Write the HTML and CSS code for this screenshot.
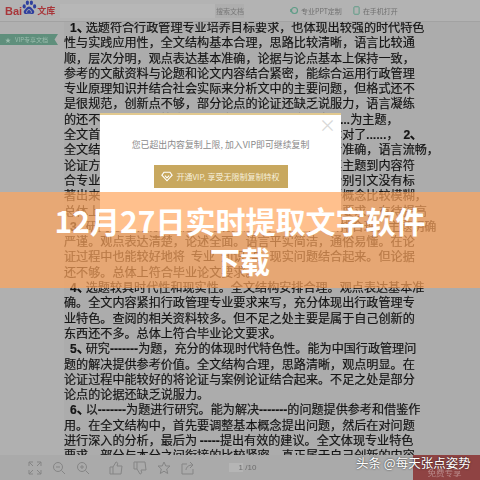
FILE: index.html
```html
<!DOCTYPE html>
<html lang="zh-CN">
<head>
<meta charset="utf-8">
<title>12月27日实时提取文字软件下载</title>
<link rel="stylesheet" href="styles.css">
</head>
<body>
<div class="screen">
  <header class="topbar">
    <div class="logo"><span class="logo-bai">Bai</span><svg class="paw" viewBox="0 0 20 20"><g fill="#2f3f9e"><ellipse cx="4" cy="8" rx="2" ry="2.6"/><ellipse cx="8" cy="3.5" rx="2" ry="2.8"/><ellipse cx="13" cy="3.5" rx="2" ry="2.8"/><ellipse cx="17" cy="8" rx="2" ry="2.6"/><path d="M10 8c-3 0-4 3-6 5-1.500 2 0 5 3 4.500 2-.3 4-.3 6 0 3 .5 4.500-2.500 3-4.500-2-2-3-5-6-5z"/></g><path d="M7 16c0-3 1.500-4 3-4s3 1 3 4" fill="none" stroke="#b3b3b3" stroke-width="1.200"/></svg><span class="logo-wk">文库</span></div>
    <div class="search"><span class="search-btn">搜索文档</span></div>
    <div class="tool"><svg class="tool-icon" viewBox="0 0 12 12"><circle cx="6" cy="6" r="4" fill="none" stroke="#5d9c86" stroke-width="1.500"/><path d="M1 4v4" stroke="#5d9c86" stroke-width="1.500"/></svg>专业PPT定制</div>
    <div class="tool"><svg class="tool-icon" viewBox="0 0 12 12"><rect x="2.500" y="1" width="7" height="10" rx="1" fill="none" stroke="#5d9c86" stroke-width="1.300"/></svg>在手机打开</div>
  </header>
  <div class="main">
    <aside class="side"><div class="vip-tag"><span class="star">★</span>VIP专享文档</div></aside>
    <article class="doc">
      <p class="first"><b>1、</b>选题符合行政管理专业培养目标要求，也体现出较强的时代特色</p>
      <p>性与实践应用性，全文结构基本合理，思路比较清晰，语言比较通</p>
      <p>顺，层次分明，观点表达基本准确，论据与论点基本上保持一致，</p>
      <p>参考的文献资料与论题和论文内容结合紧密，能综合运用行政管理</p>
      <p>专业原理知识并结合社会实际来分析文中的主要问题，但格式还不</p>
      <p>是很规范，创新点不够，部分论点的论证还缺乏说服力，语言凝练</p>
      <p>的还不够。总体上符合毕业论文要求。以本文研究<b class="dots">......</b>为主题，</p>
      <p>全文首先提出问题，结构安排得当，论述观点也基本对了<b class="dots">......</b>，<b class="num">2、</b></p>
      <p>全文结构合理，论述清楚，观点较为明确且比较清晰准确，语言流畅，</p>
      <p>论证方法得当，能够紧扣论文研究的中心主题，从其主题到内容符</p>
      <p>合专业要求，但有部分内容偏离，结构尚可，另有个别引文没有标</p>
      <p>著出来，结构有待进一步改进，同时对部分专业术语概念比较模糊，</p>
      <p>总体上符合毕业论文要求。全文主题到内容符合专业要求，有待提高</p>
      <p class="first"><b>3、</b>研究方向明确，选题具有现实意义。全文结构安排合理，主题明确</p>
      <p>严谨。观点表达清楚，论述全面。语言平实简洁，通俗易懂。在论</p>
      <p>证过程中也能较好地将&ensp;专业&ensp;知识&ensp;与&ensp;现实问题结合起来。但论据</p>
      <p>还不够。总体上符合毕业论文要求。</p>
      <p class="first"><b>4、</b>选题较具时代性和现实性。全文结构安排合理。观点表达基本准</p>
      <p>确。全文内容紧扣行政管理专业要求来写，充分体现出行政管理专</p>
      <p>业特色。查阅的相关资料较多。但不足之处主要是属于自己创新的</p>
      <p>东西还不多。总体上符合毕业论文要求。</p>
      <p class="first"><b>5、</b>研究<b>-------</b>为题，充分的体现时代特色性。能为中国行政管理问</p>
      <p>题的解决提供参考价值。全文结构合理，思路清晰，观点明显。在</p>
      <p>论证过程中能较好的将论证与案例论证结合起来。不足之处是部分</p>
      <p>论点的论据还缺乏说服力。</p>
      <p class="first"><b>6、</b>以<b>-------</b>为题进行研究。能为解决<b>-------</b>的问题提供参考和借鉴作</p>
      <p>用。在全文结构中，首先要调整基本概念提出问题，然后在对问题</p>
      <p>进行深入的分析，最后为 <b>-----</b>提出有效的建议。全文体现专业特色</p>
      <p>要求。部分与本分之间衔接的比较紧密。真正属于自己创新的内容</p>
    </article>
  </div>
  <footer class="bottombar">
    <svg class="fi" viewBox="0 0 14 14"><path d="M1 5V1h4M9 1h4v4M13 9v4H9M5 13H1V9M1 1l4 4M13 1L9 5M13 13L9 9M1 13l4-4"/></svg>
    <svg class="fi" viewBox="0 0 14 14"><circle cx="6" cy="6" r="4.500"/><path d="M4 6h4M9.500 9.500L13 13"/></svg>
    <svg class="fi" viewBox="0 0 14 14"><circle cx="6" cy="6" r="4.500"/><path d="M4 6h4M6 4v4M9.500 9.500L13 13"/></svg>
    <svg class="fi gap" viewBox="0 0 14 14"><path d="M1 6h3v7H1zM4 6l3-5c1 0 2 1 1.500 2L8 5h5l-1 8H4"/></svg>
    <svg class="fi" viewBox="0 0 14 14"><path d="M1 8h3V1H1zM4 8l3 5c1 0 2-1 1.500-2L8 9h5l-1-8H4"/></svg>
    <svg class="fi" viewBox="0 0 14 14"><path d="M7 1l1.800 4H13l-3.300 3 1 4.500L7 10.200 3.300 12.500l1-4.500L1 5h4.200z"/></svg>
    <svg class="fi" viewBox="0 0 14 14"><path d="M12 8v5H1V3h5M5 9c0-3 3-5 6-5M9 1l3 3-3 3"/></svg>
    <span class="pager"><span class="page-box">1</span> /10</span>
    <span class="free">免费专享</span>
  </footer>
  <div class="modal">
    <span class="close">×</span>
    <p class="modal-text">您已超出内容复制上限, 加入VIP即可继续复制</p>
    <div class="modal-btn"><svg class="gem" viewBox="0 0 14 12"><path d="M3.500 1h7L13 4.500 7 11 1 4.500zM4.500 5L7 7.500 9.500 5" fill="none" stroke="#fff" stroke-width="1.300"/></svg>开通VIP, 享受无限制复制特权</div>
  </div>
  <div class="banner"><h1>12月27日实时提取文字软件下载</h1></div>
  <div class="watermark">头条 @每天张点姿势</div>
</div>
</body>
</html>
```
FILE: styles.css
```css
* { box-sizing: border-box; margin: 0; padding: 0; }
html, body { width: 480px; height: 480px; overflow: hidden; }
body { font-family: "Noto Sans CJK SC", "Liberation Sans", sans-serif; background: #acacac; }
.screen { position: relative; width: 480px; height: 480px; overflow: hidden; display: flex; flex-direction: column; background: #acacac; }
.topbar { position: relative; z-index: 1; height: 22px; flex: none; display: flex; align-items: center; background: #b3b3b3; border-bottom: 1px solid #a2a2a2; filter: blur(.4px); }
.logo { width: 60px; flex: none; display: flex; align-items: center; padding-left: 5px; font-size: 9px; font-weight: 700; color: #a8363a; }
.logo-bai { font-family: "Liberation Sans", sans-serif; font-size: 11px; }
.paw { width: 16px; height: 16px; margin: -5px 0 0 -1px; flex: none; }
.logo-wk { white-space: nowrap; }
.search { width: 184px; height: 14px; background: #b7b7b7; display: flex; justify-content: flex-end; flex: none; }
.search-btn { width: 29px; font-size: 7px; line-height: 14px; color: #777; white-space: nowrap; overflow: hidden; background: #aeaeae; padding-left: 1px; }
.tool { display: flex; align-items: center; font-size: 7px; color: #6f6f6f; margin-left: 10px; white-space: nowrap; }
.tool + .tool { margin-left: 10px; }
.search + .tool { margin-left: 46px; }
.tool-icon { width: 9px; height: 9px; margin-right: 2px; }
.main { flex: 1; min-height: 0; display: flex; overflow: hidden; }
.side { width: 64px; flex: none; background: #b0b0b0; padding-top: 12px; filter: blur(.4px); }
.vip-tag { width: 58px; height: 11px; background: #5f8f7c; color: #9dbdaf; font-size: 6px; line-height: 11px; white-space: nowrap; padding-left: 5px; clip-path: polygon(0 0,100% 0,94% 50%,100% 100%,0 100%); }
.star { margin-right: 4px; }
.doc { flex: 1; margin-top: -3px; overflow: hidden; color: #141414; font-size: 12.100px; line-height: 15.300px; -webkit-text-stroke: .2px #141414; filter: blur(.35px); }
.doc p { white-space: nowrap; height: 15.300px; }
.doc .first { padding-left: 6px; }
.doc b { font-family: "Liberation Sans", sans-serif; font-weight: 700; }
.doc .first > b:first-child { margin-right: -3px; }
.doc .dots { font-size: 11px; letter-spacing: .3px; }
.doc .num { margin-left: 5px; }
.bottombar { height: 25px; flex: none; display: flex; align-items: center; padding-left: 28px; gap: 10px; background: #aaaaaa; filter: blur(.4px); position: relative; }
.fi { width: 14px; height: 14px; fill: none; stroke: #858585; stroke-width: 1; }
.fi.gap { margin-left: 9px; }
.pager { margin-left: 24px; font-size: 8px; color: #6c6c6c; font-family: "Liberation Sans", sans-serif; }
.page-box { display: inline-block; width: 14px; text-align: right; background: #b5b5b5; }
.free { position: absolute; right: 0; top: 0; width: 67px; height: 25px; background: #8f4343; color: #b98a8a; font-size: 8.500px; line-height: 34px; text-align: center; padding-right: 4px; overflow: hidden; }
.modal { position: absolute; left: 100px; top: 113px; width: 241px; height: 118px; background: #fff; border-top: 2px solid #e2c98f; text-align: center; }
.close { position: absolute; right: 5px; top: 0; font-size: 17px; line-height: 20px; color: #d8d8d8; }
.modal-text { margin-top: 24px; font-size: 8.900px; line-height: 12px; color: #8a8a8a; white-space: nowrap; }
.modal-btn { width: 134px; height: 23px; margin: 14px auto 0; background: #c8a85f; color: #f6efdc; font-size: 8px; line-height: 23px; display: flex; align-items: center; justify-content: center; }
.gem { width: 12px; height: 11px; margin-right: 3px; }
.banner { position: absolute; left: 0; top: 192px; width: 480px; height: 96px; background: rgba(255,165,92,.7); display: flex; align-items: center; justify-content: center; padding: 0 50px; }
.banner h1 { font-family: "Noto Sans CJK SC", "Noto Sans", sans-serif; font-size: 30px; line-height: 40px; font-weight: 700; color: #fff; text-align: center; }
.watermark { position: absolute; left: 356px; top: 454px; font-size: 12.500px; line-height: 17px; color: #fff; text-shadow: 0 0 2px #222; white-space: nowrap; }
```
